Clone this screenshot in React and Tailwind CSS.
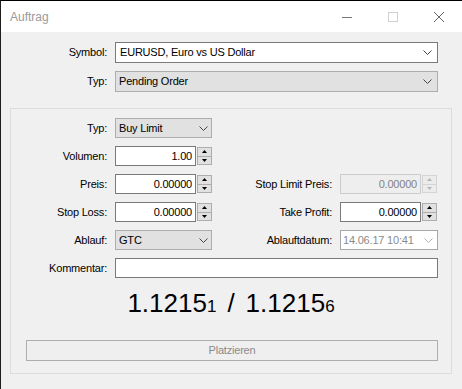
import React from "react";

const Chevron = ({ color = "#444" }) => (
  <svg width="9" height="5" viewBox="0 0 9 5" className="shrink-0">
    <polyline points="0.5,0.5 4.5,4.5 8.5,0.5" fill="none" stroke={color} strokeWidth="1" />
  </svg>
);

const Spinner = ({ disabled }) => {
  const c = disabled ? "#b5b5b5" : "#000";
  const bc = disabled ? "border-[#d4d4d4] bg-[#ececec]" : "border-[#adadad] bg-[#e1e1e1]";
  return (
    <div className="w-[15px] h-[18px] flex flex-col">
      <div className={`flex-1 border ${bc} flex items-center justify-center`}>
        <svg width="5" height="3" viewBox="0 0 5 3"><polygon points="0,3 5,3 2.5,0" fill={c} /></svg>
      </div>
      <div className={`flex-1 border border-t-0 ${bc} flex items-center justify-center`}>
        <svg width="5" height="3" viewBox="0 0 5 3"><polygon points="0,0 5,0 2.5,3" fill={c} /></svg>
      </div>
    </div>
  );
};

const SpinInput = ({ value, disabled }) => (
  <div className="flex items-center gap-[1px] h-full">
    <div
      className={`w-[81px] h-full border flex items-center justify-end pr-[3px] ${
        disabled ? "border-[#cccccc] bg-[#eeeeee] text-[#838383]" : "border-[#7a7a7a] bg-white"
      }`}
    >
      {value}
    </div>
    <Spinner disabled={disabled} />
  </div>
);

const GrayCombo = ({ text, chevronPr = "pr-[3px]" }) => (
  <div className={`h-full border border-[#adadad] bg-[#e1e1e1] flex items-center pl-[3px] ${chevronPr}`}>
    <span className="flex-1">{text}</span>
    <Chevron />
  </div>
);

const Label = ({ children }) => <div className="text-right whitespace-nowrap">{children}</div>;

export default function App() {
  return (
    <div className="w-[462px] h-[389px] bg-[#f0f0f0] border-t border-l border-t-black border-l-[#1e1e1e] flex flex-col font-['Liberation_Sans',Arial,sans-serif] text-[11px] tracking-[-0.2px] text-black overflow-hidden">
      {/* Title bar */}
      <div className="h-[31px] shrink-0 bg-white flex items-center">
        <span className="pl-[9px] text-[12px] tracking-normal text-[#9a9a9a]">Auftrag</span>
        <div className="ml-auto flex h-full">
          <div className="w-[46px] flex items-center justify-center">
            <svg width="10" height="10" viewBox="0 0 10 10"><line x1="0" y1="5.5" x2="10" y2="5.5" stroke="#777" strokeWidth="1" /></svg>
          </div>
          <div className="w-[46px] flex items-center justify-center">
            <svg width="10" height="10" viewBox="0 0 10 10"><rect x="0.5" y="0.5" width="9" height="9" fill="none" stroke="#d0d0d0" strokeWidth="1" /></svg>
          </div>
          <div className="w-[46px] flex items-center justify-center">
            <svg width="10" height="10" viewBox="0 0 10 10">
              <line x1="0" y1="0" x2="10" y2="10" stroke="#666" strokeWidth="1" />
              <line x1="10" y1="0" x2="0" y2="10" stroke="#666" strokeWidth="1" />
            </svg>
          </div>
        </div>
      </div>

      {/* Content */}
      <div className="pl-[9px] pr-[10px] pt-[10px] flex flex-col">
        <div className="grid grid-cols-[97px_323px] gap-x-[8px] gap-y-[8px]">
          <div className="h-[21px] flex items-center justify-end">Symbol:</div>
          <div className="h-[21px] border border-[#7a7a7a] bg-white flex items-center pl-[4px] pr-[5px]">
            <span className="flex-1">EURUSD, Euro vs US Dollar</span>
            <Chevron />
          </div>
          <div className="h-[21px] flex items-center justify-end">Typ:</div>
          <div className="h-[21px] border border-[#adadad] bg-[#e1e1e1] flex items-center pl-[3px] pr-[5px]">
            <span className="flex-1">Pending Order</span>
            <Chevron />
          </div>
        </div>

        {/* Group box */}
        <div className="mt-[16px] border border-[#dcdcdc] pt-[9px] pb-[12px] flex flex-col">
          <div className="grid grid-cols-[96px_97px_112px_98px] auto-rows-[20px] gap-x-[8px] gap-y-[8px] items-center">
            <Label>Typ:</Label>
            <div className="h-full"><GrayCombo text="Buy Limit" /></div>
            <div />
            <div />

            <Label>Volumen:</Label>
            <SpinInput value="1.00" />
            <div />
            <div />

            <Label>Preis:</Label>
            <SpinInput value="0.00000" />
            <Label>Stop Limit Preis:</Label>
            <SpinInput value="0.00000" disabled />

            <Label>Stop Loss:</Label>
            <SpinInput value="0.00000" />
            <Label>Take Profit:</Label>
            <SpinInput value="0.00000" />

            <Label>Ablauf:</Label>
            <div className="h-full"><GrayCombo text="GTC" /></div>
            <Label>Ablauftdatum:</Label>
            <div className="h-full border border-[#a8a8a8] bg-white flex items-center pl-[2px] pr-[4px] text-[#8a8a8a]">
              <span className="flex-1">14.06.17 10:41</span>
              <Chevron color="#b0b0b0" />
            </div>

            <Label>Kommentar:</Label>
            <div className="col-span-3 h-full border border-[#7a7a7a] bg-white" />
          </div>

          <div className="mt-[11px] h-[28px] flex items-baseline justify-center leading-[28px] tracking-normal text-black">
            <span className="text-[26px]">1.1215</span>
            <span className="text-[17px]">1</span>
            <span className="text-[26px] mx-[11px]">/</span>
            <span className="text-[26px]">1.1215</span>
            <span className="text-[17px]">6</span>
          </div>

          <div className="mt-[23px] ml-[15px] mr-[13px] h-[21px] border border-[#adadad] bg-[#efefef] flex items-center justify-center text-[#8a8a8a]">
            Platzieren
          </div>
        </div>
      </div>
    </div>
  );
}
